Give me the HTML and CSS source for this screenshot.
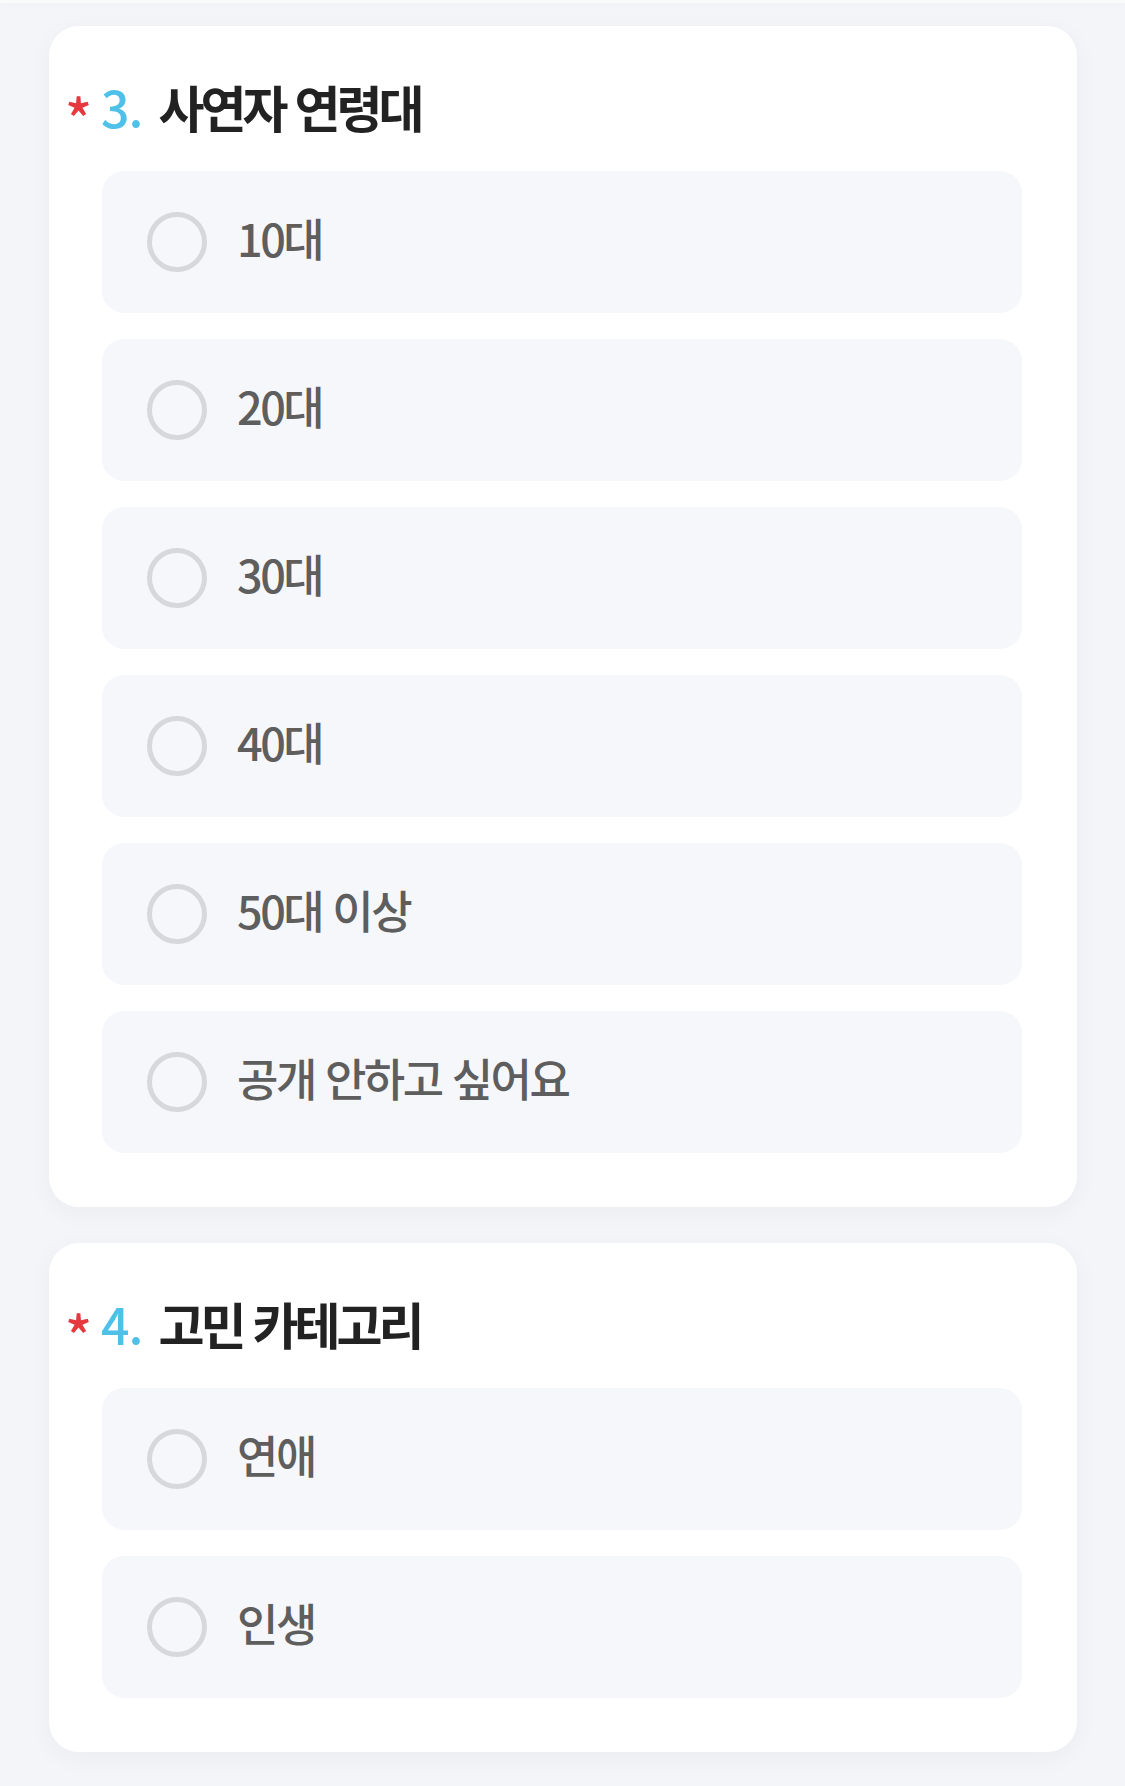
FILE: index.html
```html
<!DOCTYPE html>
<html lang="ko">
<head>
<meta charset="utf-8">
<title>설문</title>
<link rel="stylesheet" href="styles.css">
</head>
<body>
<div class="topline"></div>
<main class="page">
  <section class="card">
    <h2 class="q-title"><span class="req">*</span><span class="num">3.</span><span class="q-text">사연자 연령대</span></h2>
    <ul class="options">
      <li class="option"><span class="radio"></span><span class="label">10대</span></li>
      <li class="option"><span class="radio"></span><span class="label">20대</span></li>
      <li class="option"><span class="radio"></span><span class="label">30대</span></li>
      <li class="option"><span class="radio"></span><span class="label">40대</span></li>
      <li class="option"><span class="radio"></span><span class="label">50대 이상</span></li>
      <li class="option"><span class="radio"></span><span class="label">공개 안하고 싶어요</span></li>
    </ul>
  </section>
  <section class="card">
    <h2 class="q-title"><span class="req">*</span><span class="num">4.</span><span class="q-text">고민 카테고리</span></h2>
    <ul class="options">
      <li class="option"><span class="radio"></span><span class="label">연애</span></li>
      <li class="option"><span class="radio"></span><span class="label">인생</span></li>
    </ul>
  </section>
</main>
</body>
</html>
```

FILE: styles.css
```css
html, body {
  margin: 0;
  padding: 0;
}
body {
  background: #f4f5f8;
  font-family: "Noto Sans CJK KR", "Noto Sans", sans-serif;
  width: 1125px;
  min-height: 1786px;
}
.topline {
  height: 3px;
  background: #fafafb;
  box-shadow: 0 2px 8px rgba(0, 0, 0, 0.03);
}
.page {
  display: flex;
  flex-direction: column;
  gap: 36px;
  padding: 23px 48px 0 49px;
}
.card {
  background: #ffffff;
  border-radius: 30px;
  box-shadow: 0 6px 24px rgba(30, 40, 70, 0.045);
  padding: 53px 55px 54px 18px;
}
.q-title {
  margin: 0 0 34px 0;
  height: 58px;
  display: flex;
  align-items: center;
  font-weight: 700;
  font-size: 50px;
  line-height: 58px;
  color: #222222;
  padding-bottom: 4px;
  box-sizing: border-box;
}
.req {
  color: #e5393f;
  font-size: 56px;
  font-weight: 500;
  width: 22px;
  margin-top: 22px;
  margin-right: 14px;
  margin-left: -2px;
}
.num {
  color: #4fc1e9;
  font-weight: 500;
  margin-right: 16px;
  letter-spacing: -1px;
}
.q-text {
  letter-spacing: -4px;
}
.options {
  list-style: none;
  margin: 0 0 0 35px;
  padding: 0;
  display: flex;
  flex-direction: column;
  gap: 26px;
}
.option {
  height: 142px;
  background: #f6f7fb;
  border-radius: 22px;
  display: flex;
  align-items: center;
  padding-left: 45px;
  box-sizing: border-box;
}
.radio {
  width: 60px;
  height: 60px;
  box-sizing: border-box;
  border: 5px solid #d7d8db;
  border-radius: 50%;
  margin-right: 30px;
  flex: none;
}
.label {
  font-size: 45px;
  font-weight: 500;
  color: #5e5e5e;
  letter-spacing: -2.5px;
  line-height: 1;
  padding-bottom: 10px;
}
```
